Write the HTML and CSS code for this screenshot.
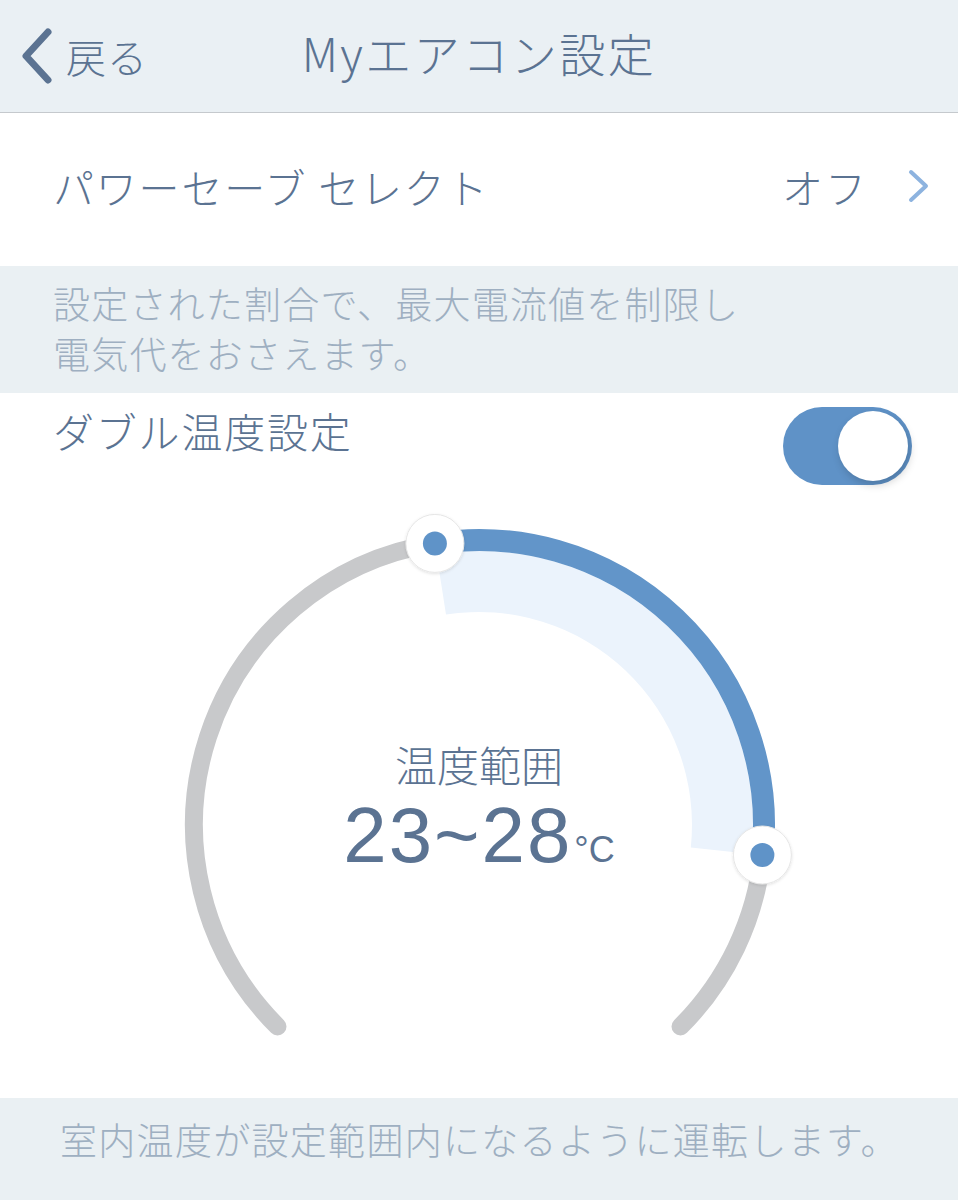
FILE: index.html
```html
<!DOCTYPE html>
<html lang="ja">
<head>
  <meta charset="UTF-8">
  <meta name="viewport" content="width=device-width, initial-scale=1.0">
  <title>Myエアコン設定</title>
  <link rel="stylesheet" href="styles.css">
</head>
<body>
  <header class="navbar">
    <a class="back" href="#">
      <svg class="back-icon" width="36" height="56" viewBox="0 0 36 56">
        <path d="M30 4 L8 28 L30 52" fill="none" stroke="#5b7392" stroke-width="7" stroke-linecap="round" stroke-linejoin="round"/>
      </svg>
      <span>戻る</span>
    </a>
    <h1 class="title">Myエアコン設定</h1>
  </header>

  <main>
    <a class="row" href="#">
      <span class="row-label">パワーセーブ セレクト</span>
      <span class="row-value">
        オフ
        <svg class="chevron" width="26" height="36" viewBox="0 0 26 36">
          <path d="M5 4 L20 18 L5 32" fill="none" stroke="#8db3df" stroke-width="4" stroke-linecap="round" stroke-linejoin="round"/>
        </svg>
      </span>
    </a>

    <p class="note note-top">設定された割合で、最大電流値を制限し<br>電気代をおさえます。</p>

    <section class="dual">
      <div class="dual-head">
        <span class="row-label">ダブル温度設定</span>
        <div class="toggle on"><div class="toggle-knob"></div></div>
      </div>

      <div class="dial">
        <svg class="dial-svg" width="958" height="613" viewBox="0 0 958 613">
          <defs>
            <filter id="knobShadow" x="-50%" y="-50%" width="200%" height="200%">
              <feDropShadow dx="0" dy="1" stdDeviation="1.5" flood-color="#000" flood-opacity="0.12"/>
            </filter>
          </defs>
          <path d="M436.6 69.3 A274 274 0 0 1 751.5 368.9 L690.8 362.4 A213 213 0 0 0 446 129.6 Z" fill="#ebf3fc"/>
          <path d="M277.5 541.5 A285 285 0 0 1 434.9 58.4" fill="none" stroke="#c8c9cb" stroke-width="18" stroke-linecap="round"/>
          <path d="M762.4 370 A285 285 0 0 1 680.5 541.5" fill="none" stroke="#c8c9cb" stroke-width="18" stroke-linecap="round"/>
          <path d="M434.9 58.4 A285 285 0 0 1 762.4 370" fill="none" stroke="#6295c9" stroke-width="22"/>
          <g filter="url(#knobShadow)">
            <circle cx="434.9" cy="58.4" r="29" fill="#fff" stroke="#e6e6e6" stroke-width="1"/>
            <circle cx="762.4" cy="370" r="29" fill="#fff" stroke="#e6e6e6" stroke-width="1"/>
          </g>
          <circle cx="434.9" cy="58.4" r="12" fill="#5f93c8"/>
          <circle cx="762.4" cy="370" r="12" fill="#5f93c8"/>
        </svg>
        <div class="dial-label">
          <div class="dial-caption">温度範囲</div>
          <div class="dial-value">23~28<span class="unit">°C</span></div>
        </div>
      </div>
    </section>

    <p class="note note-bottom">室内温度が設定範囲内になるように運転します。</p>
  </main>
</body>
</html>
```

FILE: styles.css
```css
body {
  margin: 0;
  padding: 0;
  width: 958px;
  height: 1200px;
  overflow: hidden;
  background-color: #fff;
  font-family: "Noto Sans CJK JP", "Noto Sans", sans-serif;
  font-weight: 300;
  color: #5b7392;
}

a {
  color: inherit;
  text-decoration: none;
}

/* top bar */
.navbar {
  position: relative;
  height: 112px;
  background-color: #eaf0f4;
  border-bottom: 1px solid #c5c9cd;
  display: flex;
  align-items: center;
  justify-content: center;
}

.back {
  position: absolute;
  left: 18px;
  top: 28px;
  display: flex;
  align-items: center;
  gap: 12px;
  font-size: 40px;
  line-height: 56px;
  letter-spacing: 1px;
}

.back-icon {
  display: block;
}

.title {
  margin: 0;
  font-size: 46px;
  font-weight: 300;
  line-height: 60px;
  margin-top: -8px;
  letter-spacing: 2.5px;
}

/* setting rows */
.row {
  height: 153px;
  display: flex;
  align-items: center;
  justify-content: space-between;
  padding: 0 26px 0 53px;
  margin-top: -4px;
  margin-bottom: 4px;
}

.row-label {
  font-size: 41px;
  line-height: 52px;
  letter-spacing: 1.8px;
}

.row-value {
  display: flex;
  align-items: center;
  gap: 38px;
  font-size: 41px;
  line-height: 52px;
  letter-spacing: 2px;
}

.chevron {
  display: block;
}

.note {
  margin: 0;
  background-color: #eaf0f3;
  color: #9eafc1;
  font-size: 37px;
  line-height: 50px;
  letter-spacing: 1.2px;
  padding: 12px 53px 15px;
}

.note-bottom {
  height: 102px;
  box-sizing: border-box;
  padding: 16px 0 0 60px;
  letter-spacing: 1.3px;
  white-space: nowrap;
}

/* double temperature */
.dual-head {
  display: flex;
  justify-content: space-between;
  align-items: flex-start;
  padding: 14px 46px 0 53px;
}

.dual-head .row-label {
  margin-top: -3px;
}

.toggle {
  position: relative;
  width: 129px;
  height: 78px;
  border-radius: 39px;
  background-color: #5f92c7;
}

.toggle-knob {
  position: absolute;
  right: 4px;
  top: 4px;
  width: 70px;
  height: 70px;
  border-radius: 50%;
  background-color: #fff;
  box-shadow: 2px 4px 8px rgba(0, 0, 0, 0.18);
}

.dial {
  position: relative;
  height: 613px;
}

.dial-svg {
  display: block;
}

.dial-label {
  position: absolute;
  left: 0;
  right: 0;
  top: 252px;
  text-align: center;
}

.dial-caption {
  font-size: 42px;
  line-height: 54px;
}

.dial-value {
  font-family: "Liberation Sans", Arial, sans-serif;
  font-weight: 400;
  font-size: 78px;
  line-height: 88px;
  letter-spacing: 2px;
}

.unit {
  font-size: 36px;
  margin-left: 2px;
  letter-spacing: 0;
}
```
